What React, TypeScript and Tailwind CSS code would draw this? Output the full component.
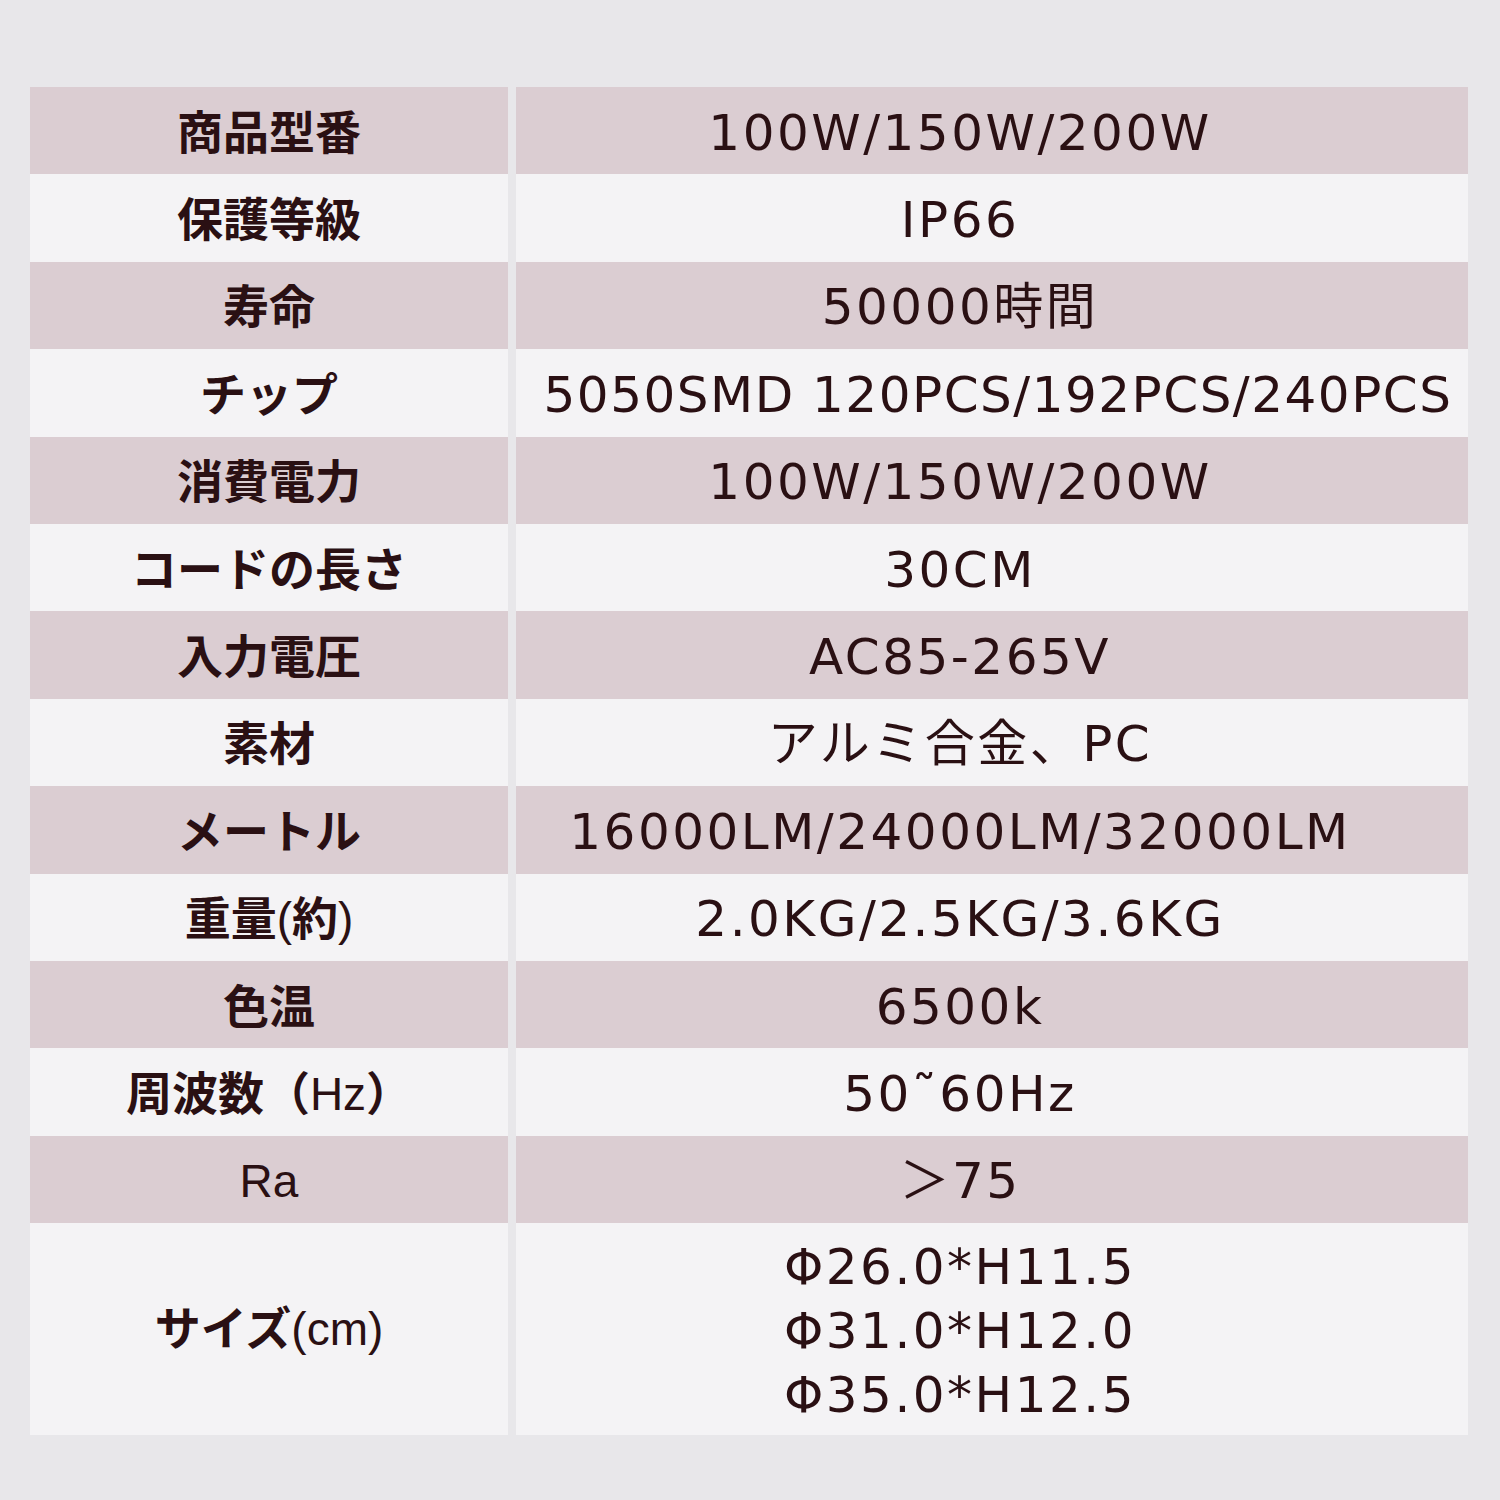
import type React from "react";

const rows: { label: React.ReactNode; key: string; value: string; wide?: boolean }[] = [
  { key: "model", label: "商品型番", value: "100W/150W/200W" },
  { key: "ip", label: "保護等級", value: "IP66" },
  { key: "life", label: "寿命", value: "50000時間" },
  { key: "chip", label: "チップ", value: "5050SMD 120PCS/192PCS/240PCS", wide: true },
  { key: "power", label: "消費電力", value: "100W/150W/200W" },
  { key: "cord", label: "コードの長さ", value: "30CM" },
  { key: "volt", label: "入力電圧", value: "AC85-265V" },
  { key: "material", label: "素材", value: "アルミ合金、PC" },
  { key: "lumen", label: "メートル", value: "16000LM/24000LM/32000LM" },
  {
    key: "weight",
    label: (
      <>
        重量<span className="font-normal">(</span>約<span className="font-normal">)</span>
      </>
    ),
    value: "2.0KG/2.5KG/3.6KG",
  },
  { key: "temp", label: "色温", value: "6500k" },
  {
    key: "freq",
    label: (
      <>
        周波数（<span className="font-normal">Hz</span>）
      </>
    ),
    value: "50˜60Hz",
  },
  { key: "ra", label: <span className="font-normal">Ra</span>, value: "＞75" },
];

const sizes = ["Φ26.0*H11.5", "Φ31.0*H12.0", "Φ35.0*H12.5"];

const labelFont =
  "font-['Liberation_Sans','Noto_Sans_CJK_JP',sans-serif] text-[46px] font-bold text-[#2a1013]";
const valueFont =
  "font-['DejaVu_Sans','Noto_Sans_CJK_JP',sans-serif] text-[50px] text-[#2a1013]";

export default function App() {
  return (
    <div className="w-[1500px] h-[1500px] bg-[#e8e7ea] pt-[87px] pl-[30px]">
      <div className="w-[1438px] flex flex-col">
        {rows.map((row, i) => {
          const bg = i % 2 === 0 ? "bg-[#dbcdd2]" : "bg-[#f4f3f5]";
          return (
            <div key={row.key} className="flex gap-2 h-[87.4px]">
              <div
                className={`w-[478px] flex items-center justify-center leading-none pt-[4px] ${bg} ${labelFont}`}
              >
                {row.label}
              </div>
              <div
                className={`flex-1 flex items-center justify-center leading-none whitespace-nowrap pt-[4px] ${bg} ${valueFont} ${
                  row.wide ? "pl-[12px] tracking-[1.5px]" : "pr-[64px] tracking-[2.5px]"
                }`}
              >
                {row.value}
              </div>
            </div>
          );
        })}
        <div className="flex gap-2 h-[212px]">
          <div
            className={`w-[478px] flex items-center justify-center bg-[#f4f3f5] leading-none ${labelFont}`}
          >
            サイズ<span className="font-normal">(cm)</span>
          </div>
          <div
            className={`flex-1 flex flex-col items-center justify-center bg-[#f4f3f5] pr-[64px] pt-[4px] leading-[64px] tracking-[2.5px] ${valueFont}`}
          >
            {sizes.map((s) => (
              <div key={s}>{s}</div>
            ))}
          </div>
        </div>
      </div>
    </div>
  );
}
